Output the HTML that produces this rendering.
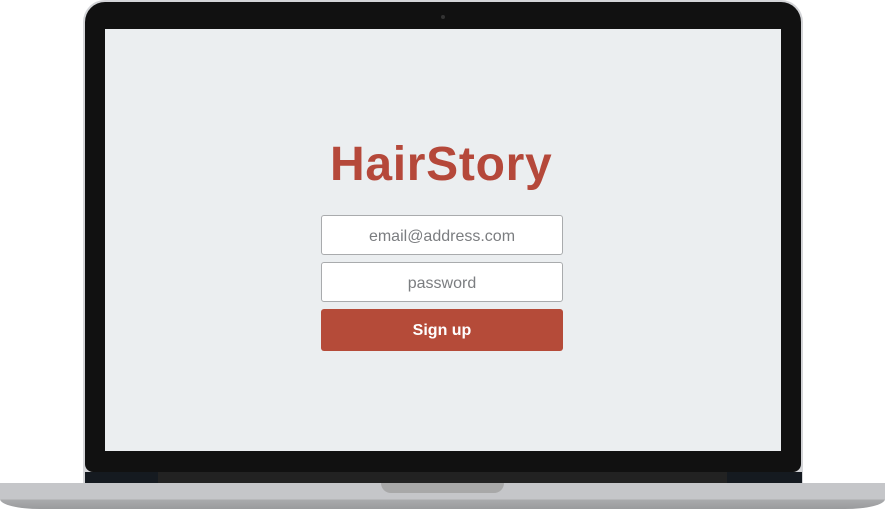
<!DOCTYPE html>
<html><head><style>
html,body{margin:0;padding:0;background:#fff;width:885px;height:509px;overflow:hidden;position:relative;font-family:"Liberation Sans",sans-serif}
.abs{position:absolute}
.lid{left:83px;top:0;width:720px;height:490px;background:#d4d5d8;border-radius:22px 22px 0 0}
.bez{left:85px;top:2px;width:716px;height:470px;background:#111;border-radius:20px 20px 8px 8px}
.screen{left:105px;top:29px;width:676px;height:422px;background:#ebeef0}
.strip{left:85px;top:472px;width:717px;height:12px;background:#151a20}
.strip2{left:158px;top:472px;width:569px;height:12px;background:#222}
.base{left:0;top:483px;width:885px;height:26px;background:linear-gradient(#c5c6c9 0,#c5c6c9 16px,#a9aaac 17px,#9a9b9d 26px);border-radius:0 0 40px 40px/0 0 10px 10px}
.notch{left:381px;top:483px;width:123px;height:10px;background:#a8a8a8;border-radius:0 0 10px 10px}
.cam{left:441px;top:15px;width:4px;height:4px;background:#333;border-radius:50%}
.logo{left:330px;width:230px;top:137px;text-align:left;font-size:48px;font-weight:bold;color:#b5483a;letter-spacing:0.7px}
.inp{left:321px;width:240px;height:38px;background:#fff;border:1px solid #a9abad;border-radius:3px;text-align:center;line-height:42px;font-size:16px;color:#7b7d80;font-weight:300}
.btn{left:321px;top:309px;width:242px;height:42px;background:#b54b39;border-radius:3px;text-align:center;line-height:44px;color:#fff;font-weight:bold;font-size:16px}
</style></head><body>
<div class="abs lid"></div>
<div class="abs bez"></div>
<div class="abs cam"></div>
<div class="abs screen"></div>
<div class="abs strip"></div>
<div class="abs strip2"></div>
<div class="abs base"></div>
<div class="abs notch"></div>
<div class="abs logo">HairStory</div>
<div class="abs inp" style="top:215px">email@address.com</div>
<div class="abs inp" style="top:262px">password</div>
<div class="abs btn">Sign up</div>
</body></html>
